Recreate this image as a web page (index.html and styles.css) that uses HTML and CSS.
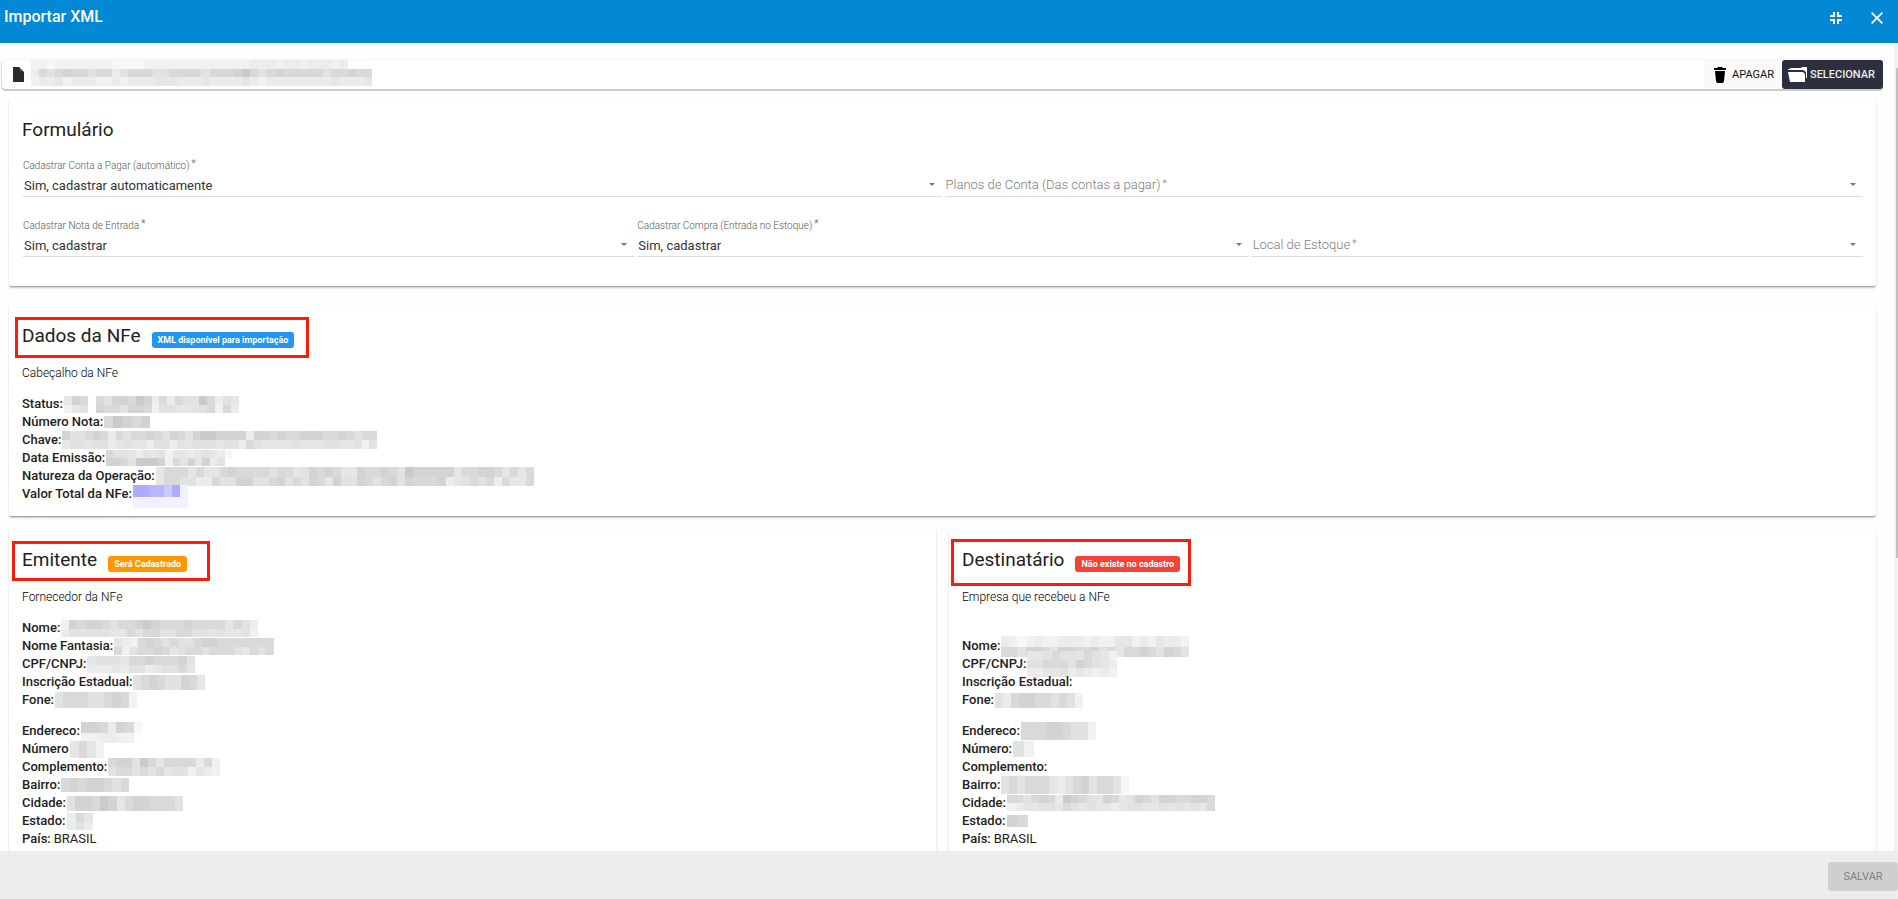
FILE: index.html
```html
<!DOCTYPE html>
<html lang="pt-BR">
<head>
<meta charset="utf-8">
<title>Importar XML</title>
<link rel="stylesheet" href="styles.css">
</head>
<body>
<header class="topbar">
  <h1 class="topbar-title">Importar XML</h1>
  <div class="topbar-actions">
    <button class="icon-button" type="button" aria-label="Restaurar"><svg width="12" height="12" viewBox="0 0 12 12"><path d="M3 0h2v5H0V3h3zM7 0h2v3h3v2H7zM0 7h5v5H3V9H0zM7 7h5v2H9v3H7z"/></svg></button>
    <button class="icon-button" type="button" aria-label="Fechar"><svg width="12" height="12" viewBox="0 0 12 12"><path d="M1.3 0 6 4.7 10.7 0 12 1.3 7.3 6l4.7 4.7-1.3 1.3L6 7.3 1.3 12 0 10.7 4.7 6 0 1.3z"/></svg></button>
  </div>
</header>
<div class="body">
<main class="content">
  <div class="filebar">
    <svg class="file-icon" width="11" height="15" viewBox="0 0 11 15"><path fill="#2b2b2b" d="M0 0h6l5 5v10H0z"/><path fill="#666" d="M7 1l3 3H7z"/></svg>
    <span class="mosaic" data-w="341" data-h="26" data-rows="bbabbbbbbbaaaabbbbbbbbbbbbbcccbccbcccbc000/cfefgffeffcefffeeffffefffghfefgfffffeffgfff/bccdbcccbbcbcccdddcccdccccdcbccccccccdcccdd"></span>
    <div class="filebar-actions">
      <button class="btn btn-clear" type="button"><svg width="12" height="16" viewBox="0 0 12 16"><path d="M4 0h4l1 1h3v2H0V1h3zM1 4h10l-1 10q0 2-2 2H4q-2 0-2-2z"/></svg>APAGAR</button>
      <button class="btn btn-select" type="button"><svg width="19" height="15" viewBox="0 0 19 15"><path fill="#fff" d="M2 1h11l1-1h5v11h-1V6l-1-2-2-1H0V2h2zM0 5h15l2 2v8H2z"/></svg>SELECIONAR</button>
    </div>
  </div>

  <section class="card card-form">
    <h2 class="card-title">Formulário</h2>
    <form class="form">
      <div class="form-row">
        <div class="field"><label for="conta">Cadastrar Conta a Pagar (automático)<span class="req">*</span></label><select id="conta"><option>Sim, cadastrar automaticamente</option></select></div>
        <div class="field field-empty"><label for="plano">Planos de Conta (Das contas a pagar)<span class="req">*</span></label><select id="plano"><option></option></select></div>
      </div>
      <div class="form-row">
        <div class="field"><label for="nota">Cadastrar Nota de Entrada<span class="req">*</span></label><select id="nota"><option>Sim, cadastrar</option></select></div>
        <div class="field"><label for="compra">Cadastrar Compra (Entrada no Estoque)<span class="req">*</span></label><select id="compra"><option>Sim, cadastrar</option></select></div>
        <div class="field field-empty"><label for="local">Local de Estoque<span class="req">*</span></label><select id="local"><option></option></select></div>
      </div>
    </form>
  </section>

  <section class="card card-nfe">
    <div class="card-head mark mark-nfe"><h2 class="card-title">Dados da NFe</h2><span class="badge badge-blue">XML disponível para importação</span></div>
    <p class="card-sub">Cabeçalho da NFe</p>
    <dl class="data">
      <div><dt>Status:</dt><dd class="mosaic" data-w="175" data-h="17" data-rows="dgf0feggfhgcfcfeehfced/bde0gffeggfbeeddeefbfcd"></dd></div>
      <div><dt>Número Nota:</dt><dd class="mosaic" data-w="46" data-h="12" data-rows="fhgfg"></dd></div>
      <div><dt>Chave:</dt><dd class="mosaic" data-w="315" data-h="18" data-rows="geefgfcfeffgfegfeghhggggcggfgffgggffgfeff/deedeecdeddceecedeeedeecfeddddedddeeddebe"></dd></div>
      <div><dt>Data Emissão:</dt><dd class="mosaic" data-w="126" data-h="16" data-rows="feedcedebddcdedca/ggfehhhgbfegdgce0"></dd></div>
      <div><dt>Natureza da Operação:</dt><dd class="mosaic" data-w="378" data-h="19" data-rows="dfffdfddfgffffeffdegfgfddgffgfehgggggdffggfdfdf/dffeeccfeeggeefgefegfdgeegfefgegfffgcdefefcfddf"></dd></div>
      <div><dt>Valor Total da NFe:</dt><dd class="mosaic mosaic-top" data-w="55" data-h="23" data-rows="vvwwxvz/yyyyyyz" ></dd></div>
    </dl>
  </section>

  <div class="pair">
    <section class="card">
      <div class="card-head mark mark-emit"><h2 class="card-title">Emitente</h2><span class="badge badge-orange">Será Cadastrado</span></div>
      <p class="card-sub">Fornecedor da NFe</p>
      <dl class="data">
        <div><dt>Nome:</dt><dd class="mosaic" data-w="197" data-h="17" data-rows="bgfggfeffghgfffgffffdfec/ceeeeeddfeffeeffeededdeb"></dd></div>
        <div><dt>Nome Fantasia:</dt><dd class="mosaic" data-w="160" data-h="17" data-rows="dcbfgfefeefggfffffff/fbeffgfdeffefffedfef"></dd></div>
        <div><dt>CPF/CNPJ:</dt><dd class="mosaic" data-w="108" data-h="17" data-rows="deeedffgfffge/cccdceecdeefd"></dd></div>
        <div><dt>Inscrição Estadual:</dt><dd class="mosaic" data-w="72" data-h="15" data-rows="efgfeegfd"></dd></div>
        <div><dt>Fone:</dt><dd class="mosaic" data-w="82" data-h="16" data-rows="efffeefgfb"></dd></div>
      </dl>
      <dl class="data">
        <div><dt>Endereco:</dt><dd class="mosaic mosaic-top" data-w="62" data-h="21" data-rows="ggfcgfa/bbccbb0"></dd></div>
        <div><dt>Número</dt><dd class="mosaic" data-w="34" data-h="17" data-rows="dfdb"></dd></div>
        <div><dt>Complemento:</dt><dd class="mosaic" data-w="112" data-h="18" data-rows="fggehfdffffcfb/effefefdeebdcb"></dd></div>
        <div><dt>Bairro:</dt><dd class="mosaic" data-w="68" data-h="14" data-rows="fgfggfef"></dd></div>
        <div><dt>Cidade:</dt><dd class="mosaic" data-w="116" data-h="15" data-rows="eggfhgdfggfffe"></dd></div>
        <div><dt>Estado:</dt><dd class="mosaic" data-w="26" data-h="17" data-rows="cfd/cec"></dd></div>
        <div><dt>País:</dt><dd class="plain">BRASIL</dd></div>
      </dl>
    </section>
    <section class="card">
      <div class="card-head mark mark-dest"><h2 class="card-title">Destinatário</h2><span class="badge badge-red">Não existe no cadastro</span></div>
      <p class="card-sub">Empresa que recebeu a NFe</p>
      <dl class="data data-late">
        <div><dt>Nome:</dt><dd class="mosaic" data-w="188" data-h="21" data-rows="cbabcbbcccbcbbddbcbdccb/ffeggfeggffgefdffgfegfe"></dd></div>
        <div><dt>CPF/CNPJ:</dt><dd class="mosaic" data-w="90" data-h="26" data-rows="ddefeedfedb/eefffegfedc/ccddecdcbcb"></dd></div>
        <div><dt>Inscrição Estadual:</dt><dd></dd></div>
        <div><dt>Fone:</dt><dd class="mosaic" data-w="88" data-h="15" data-rows="ecfggffefeb"></dd></div>
      </dl>
      <dl class="data">
        <div><dt>Endereco:</dt><dd class="mosaic" data-w="75" data-h="18" data-rows="fffggfeeb"></dd></div>
        <div><dt>Número:</dt><dd class="mosaic" data-w="21" data-h="16" data-rows="eb"></dd></div>
        <div><dt>Complemento:</dt><dd></dd></div>
        <div><dt>Bairro:</dt><dd class="mosaic" data-w="128" data-h="18" data-rows="efefffdcefgeffea"></dd></div>
        <div><dt>Cidade:</dt><dd class="mosaic" data-w="208" data-h="16" data-rows="ffefgfchgfedgfdegfeggffggf/bcddeedfededdcdeeddedededf"></dd></div>
        <div><dt>Estado:</dt><dd class="mosaic" data-w="21" data-h="12" data-rows="gf"></dd></div>
        <div><dt>País:</dt><dd class="plain">BRASIL</dd></div>
      </dl>
    </section>
  </div>
</main>
<div class="scroll-track" aria-hidden="true"><div class="scroll-thumb"></div></div>
</div>
<footer class="footer"><button class="btn btn-save" type="button" disabled>SALVAR</button></footer>
<script src="mosaic.js"></script>
</body>
</html>
```
FILE: styles.css
```css
*, *::before, *::after { box-sizing: border-box; }
body {
  margin: 0;
  height: 100vh;
  display: flex;
  flex-direction: column;
  overflow: hidden;
  font: 400 13px/18px Roboto, "Liberation Sans", sans-serif;
  color: #212121;
  background: #fefefe;
}
h1, h2, p, dl, dd { margin: 0; }
button, select { font-family: inherit; border: 0; margin: 0; }

.topbar {
  flex: none;
  height: 43px;
  display: flex;
  justify-content: space-between;
  align-items: flex-start;
  background: #0288d4;
  color: #fff;
  padding: 0 9px 0 4px;
}
.topbar-title { font-size: 16px; line-height: 34px; font-weight: 500; }
.topbar-actions { display: flex; gap: 17px; padding-top: 6px; }
.icon-button {
  display: flex;
  align-items: center;
  justify-content: center;
  width: 24px;
  height: 24px;
  padding: 0;
  background: none;
  fill: #fff;
}

.body { flex: 1; min-height: 0; display: flex; }
.content { flex: 1; min-width: 0; overflow: hidden; padding-top: 17px; }
.scroll-track { flex: none; width: 4px; background: #f1f1f1; padding: 25px 0 0 2px; }
.scroll-thumb { height: 490px; background: #c1c1c1; }

.filebar {
  display: flex;
  align-items: center;
  height: 29px;
  margin: 0 11px 10px 2px;
  border-radius: 4px;
  background: #fff;
  box-shadow: 0 2px 0 #ccc, -1px 1px 0 #d8d8d8, 0 -1px 1px #f4f4f4;
}
.file-icon { margin: 0 7px 0 11px; }
.filebar .mosaic { align-self: flex-start; }
.filebar-actions { margin-left: auto; display: flex; }
.btn {
  display: flex;
  align-items: center;
  justify-content: center;
  height: 29px;
  border-radius: 3px;
  font-size: 11px;
  font-weight: 400;
  line-height: 16px;
}
.btn-clear { gap: 6px; padding: 0 8px 0 10px; background: #fafafa; color: #111; }
.btn-select { gap: 3px; padding: 0 8px 0 6px; background: #2b2f3e; color: #eee; font-weight: 500; }
.btn-save { width: 70px; background: #cfcfcf; color: #808080; }

.card {
  margin: 0 18px 0 9px;
  padding: 19px 10px 12px 13px;
  background: #fff;
  border-radius: 3px;
  border-bottom: 1px solid #a6a6a6;
  box-shadow: 0 1px 2px rgba(0, 0, 0, .22);
}
.card-title { font-size: 19px; line-height: 24px; font-weight: 400; }
.card-head { position: relative; display: flex; gap: 11px; }
.card-sub { margin: 17px 0 14px; font-size: 12px; line-height: 16px; font-weight: 300; color: #000; }
.card-form { padding-bottom: 29px; }
.card-nfe { margin-top: 18px; margin-bottom: 12px; padding-bottom: 13px; }
.pair { display: flex; gap: 13px; margin: 0 18px 0 9px; }
.pair .card { flex: 1; margin: 0; }

.form { display: flex; flex-direction: column; gap: 22px; margin: 17px 0 0 1px; }
.form-row { display: flex; }
.field { position: relative; flex: 1; display: flex; flex-direction: column; gap: 3px; border-bottom: 1px solid #dcdcdc; height: 38px; margin-right: 3px; }
.field label { font-size: 10px; line-height: 12px; font-weight: 300; color: #555; }
.field select {
  appearance: none;
  width: 100%;
  height: 22px;
  padding: 0 1px;
  background: none;
  color: #333;
  font-size: 13px;
}
.field::after {
  content: "";
  position: absolute;
  right: 7px;
  bottom: 10px;
  border: 3px solid transparent;
  border-top-color: #777;
  border-bottom: 0;
}
.field-empty { justify-content: flex-end; }
.field-empty label { position: absolute; left: 1px; bottom: 2px; font-size: 13px; line-height: 18px; color: #7c7c7c; }
.req { margin-left: 2px; font-size: 10px; vertical-align: 2px; line-height: 1; }

.badge {
  align-self: flex-end;
  height: 16px;
  padding: 0 6px;
  border-radius: 3px;
  color: #fff;
  font-size: 9px;
  line-height: 16px;
  font-weight: 700;
}
.badge-blue { background: #2196f3; }
.badge-orange { background: #ff9800; }
.badge-red { background: #f44336; }

.mark::before { content: ""; position: absolute; border: 3px solid #ff1a0c; }
.mark-nfe::before { left: -7px; top: -7px; width: 294px; height: 41px; }
.mark-emit::before { left: -10px; top: -7px; width: 198px; height: 40px; }
.mark-dest::before { left: -11px; top: -9px; width: 240px; height: 47px; }

.data > div { display: flex; align-items: center; gap: 1px; height: 18px; }
.data dt { font-weight: 500; white-space: nowrap; }
.data .plain { padding-left: 2px; }
.data + .data { margin-top: 13px; }
.data-late { padding-top: 18px; }
.mosaic { flex: none; display: block; }
.mosaic svg { display: block; }
.data > div > .mosaic-top { align-self: flex-start; }

.footer {
  flex: none;
  display: flex;
  justify-content: flex-end;
  padding: 11px 0 8px;
  background: #ededed;
}
```
FILE: mosaic.js
```js
// Draws the pixelated blocks that hide private values.
const shades = {
  0: "#fefefe", a: "#f6f7f7", b: "#f1f1f2", c: "#ebeced", d: "#e7e6e7",
  e: "#e1e2e2", f: "#dad9da", g: "#d3d4d2", h: "#cbc9cb",
  v: "#aeaaff", w: "#b9b6ff", x: "#cbc8ff", y: "#f2f2ff", z: "#f0f0ff"
};
const ns = "http://www.w3.org/2000/svg";
document.querySelectorAll(".mosaic").forEach(el => {
  const rows = el.dataset.rows.split("/");
  const cols = rows[0].length;
  const svg = document.createElementNS(ns, "svg");
  svg.setAttribute("width", el.dataset.w);
  svg.setAttribute("height", el.dataset.h);
  svg.setAttribute("viewBox", `0 0 ${cols} ${rows.length}`);
  svg.setAttribute("preserveAspectRatio", "none");
  svg.setAttribute("shape-rendering", "crispEdges");
  rows.forEach((row, y) => [...row].slice(0, cols).forEach((c, x) => {
    const r = document.createElementNS(ns, "rect");
    r.setAttribute("x", x);
    r.setAttribute("y", y);
    r.setAttribute("width", 1);
    r.setAttribute("height", 1);
    r.setAttribute("fill", shades[c]);
    svg.append(r);
  }));
  el.append(svg);
});
```
